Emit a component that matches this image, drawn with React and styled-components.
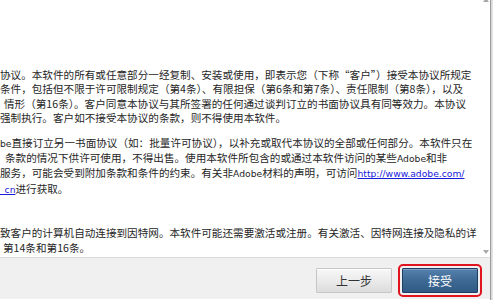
import React from 'react'
import styled, { createGlobalStyle } from 'styled-components'

const GlobalStyle = createGlobalStyle`
  html, body {
    margin: 0;
    padding: 0;
    background: #ffffff;
    overflow: hidden;
  }
  #root {
    width: 500px;
    height: 300px;
  }
`

const Page = styled.div`
  display: flex;
  width: 500px;
  height: 300px;
  background: #ffffff;
`

const Window = styled.div`
  display: flex;
  flex-direction: column;
  width: 490px;
  height: 300px;
`

const Frame = styled.div`
  width: 3px;
  height: 300px;
  background: linear-gradient(to right, #9c9c9c 0, #9c9c9c 1px, #d4d4d4 1px, #e8e8e8 3px);
`

const Content = styled.div`
  display: flex;
  height: 257px;
  background: #ffffff;
  overflow: hidden;
`

const TextArea = styled.div`
  flex: 1;
  overflow: hidden;
  padding-top: 68px;
  font-family: "Noto Sans CJK SC", "Liberation Sans", sans-serif;
  font-size: 10.6px;
  line-height: 14.4px;
  color: #262626;
`

const Paragraph = styled.div`
  margin-top: ${(props) => props.$gap || 0}px;
`

const Line = styled.div`
  white-space: nowrap;
  padding-left: ${(props) => props.$indent || 0}px;
`

const Latin = styled.span`
  font-family: "DejaVu Sans", sans-serif;
  font-size: 9.2px;
`

const Link = styled.a`
  color: #1a1adb;
  text-decoration: underline;
  font-family: "DejaVu Sans", sans-serif;
  font-size: 9.2px;
`

const ScrollBar = styled.div`
  display: flex;
  flex-direction: column;
  justify-content: space-between;
  align-items: center;
  width: 8px;
  padding: 0 0 3px;
`

const Arrow = styled.div`
  width: 0;
  height: 0;
  border-left: 3px solid transparent;
  border-right: 3px solid transparent;
  ${(props) =>
    props.$up
      ? 'border-bottom: 4px solid #a8a8a8; margin-top: -2px;'
      : 'border-top: 4px solid #a8a8a8;'}
`

const Footer = styled.div`
  display: flex;
  justify-content: flex-end;
  align-items: flex-start;
  gap: 10px;
  height: 42px;
  padding: 10px 12px 0 0;
  box-sizing: border-box;
  background: #f0f0f0;
  border-top: 1px solid #dadada;
`

const Button = styled.button`
  width: 76px;
  height: 25px;
  margin: 0;
  padding: 0;
  font-family: "Noto Sans CJK SC", sans-serif;
  font-size: 12px;
  cursor: pointer;
  border-radius: 1px;
  color: ${(props) => (props.$primary ? '#ffffff' : '#333333')};
  border: 1px solid ${(props) => (props.$primary ? '#1f3f62' : '#c6c6c6')};
  background: ${(props) =>
    props.$primary
      ? 'linear-gradient(to bottom, #5581ad 0%, #3d6993 50%, #305a85 100%)'
      : 'linear-gradient(to bottom, #f7f7f7 0%, #ebebeb 50%, #dcdcdc 100%)'};
  outline: ${(props) => (props.$primary ? '2px solid #e0141e' : 'none')};
  outline-offset: 2px;
  box-shadow: ${(props) =>
    props.$primary ? 'inset 0 1px 0 rgba(255,255,255,0.25)' : 'inset 0 1px 0 #ffffff'};
`

const App = () => {
  return (
    <>
      <GlobalStyle />
      <Page>
        <Window>
          <Content>
            <TextArea>
              <Paragraph>
                <Line>协议。本软件的所有或任意部分一经复制、安装或使用，即表示您（下称“客户”）接受本协议所规定</Line>
                <Line>条件，包括但不限于许可限制规定（第4条）、有限担保（第6条和第7条）、责任限制（第8条），以及</Line>
                <Line $indent={4}>情形（第16条）。客户同意本协议与其所签署的任何通过谈判订立的书面协议具有同等效力。本协议</Line>
                <Line>强制执行。客户如不接受本协议的条款，则不得使用本软件。</Line>
              </Paragraph>
              <Paragraph $gap={10}>
                <Line><Latin>be</Latin>直接订立另一书面协议（如：批量许可协议），以补充或取代本协议的全部或任何部分。本软件只在</Line>
                <Line $indent={5}>条款的情况下供许可使用，不得出售。使用本软件所包含的或通过本软件访问的某些<Latin>Adobe</Latin>和非</Line>
                <Line>服务，可能会受到附加条款和条件的约束。有关非<Latin>Adobe</Latin>材料的声明，可访问<Link href="#">http://www.adobe.com/</Link></Line>
                <Line><Link href="#">_cn</Link>进行获取。</Line>
              </Paragraph>
              <Paragraph $gap={29}>
                <Line>致客户的计算机自动连接到因特网。本软件可能还需要激活或注册。有关激活、因特网连接及隐私的详</Line>
                <Line $indent={3}>第14条和第16条。</Line>
              </Paragraph>
            </TextArea>
            <ScrollBar>
              <Arrow $up />
              <Arrow />
            </ScrollBar>
          </Content>
          <Footer>
            <Button>上一步</Button>
            <Button $primary>接受</Button>
          </Footer>
        </Window>
        <Frame />
      </Page>
    </>
  )
}

export default App
